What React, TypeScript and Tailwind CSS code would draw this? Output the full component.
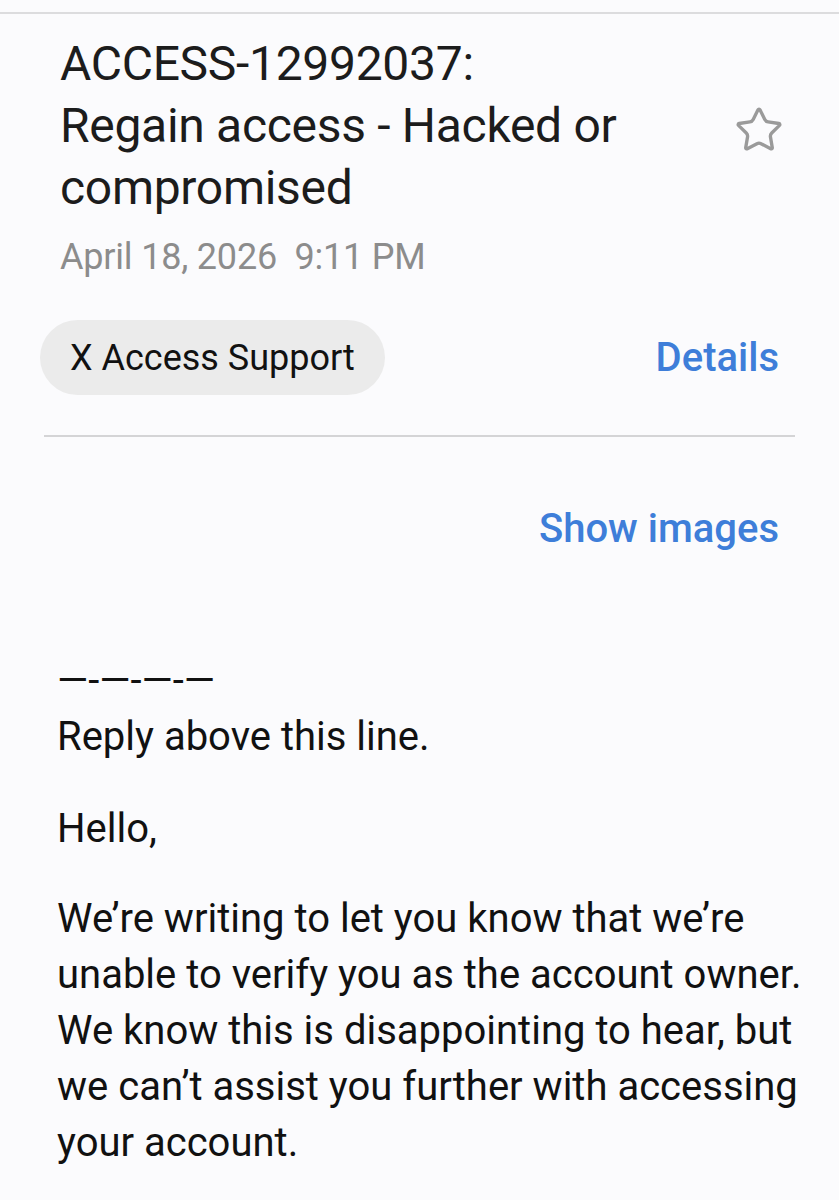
import { Star } from "lucide-react";

const App = () => {
  return (
    <div className="min-h-[1200px] w-[839px] bg-[#fbfbfd] overflow-hidden">
      <div className="pt-[12px]">
        <div className="h-[2px] bg-[#dcdcde]" />
      </div>

      <div className="px-[60px] pt-[19px] font-['Roboto',sans-serif]">
        <div className="flex items-start justify-between">
          <h1 className="text-[48px] leading-[62px] text-[#1c1c1c] tracking-[-0.3px] max-w-[640px]">
            ACCESS-12992037:
            <br />
            Regain access - Hacked or compromised
          </h1>
          <Star
            className="mt-[72px] mr-[-5px] text-[#9a9a9a]"
            size={50}
            strokeWidth={1.6}
          />
        </div>
        <p className="mt-[18px] text-[36px] leading-[40px] text-[#8c8c8c] tracking-[-0.2px]">
          April 18, 2026&nbsp;&nbsp;9:11 PM
        </p>
      </div>

      <div className="mx-[40px] mt-[43px] flex items-center justify-between font-['Roboto',sans-serif]">
        <div className="h-[75px] px-[30px] rounded-full bg-[#ebebeb] flex items-center text-[36px] text-[#111] tracking-[0px]">
          X Access Support
        </div>
        <span className="mr-[20px] text-[40px] font-medium text-[#3e7ed9] tracking-[0px]">
          Details
        </span>
      </div>

      <div className="mx-[44px] mt-[40px] h-[2px] bg-[#d4d4d6]" />

      <div className="flex justify-end px-[60px] mt-[62px] font-['Roboto',sans-serif]">
        <span className="text-[40px] font-medium text-[#3e7ed9]">
          Show images
        </span>
      </div>

      <div className="pl-[57px] pr-[20px] mt-[94px] font-['Roboto',sans-serif] text-[40px] leading-[56px] text-[#111]">
        <p>—-—-—-—</p>
        <p>Reply above this line.</p>
        <p className="mt-[36px]">Hello,</p>
        <p className="mt-[34px]">
          We’re writing to let you know that we’re unable to verify you as the
          account owner. We know this is disappointing to hear, but we can’t
          assist you further with accessing your account.
        </p>
      </div>
    </div>
  );
};

export default App;
